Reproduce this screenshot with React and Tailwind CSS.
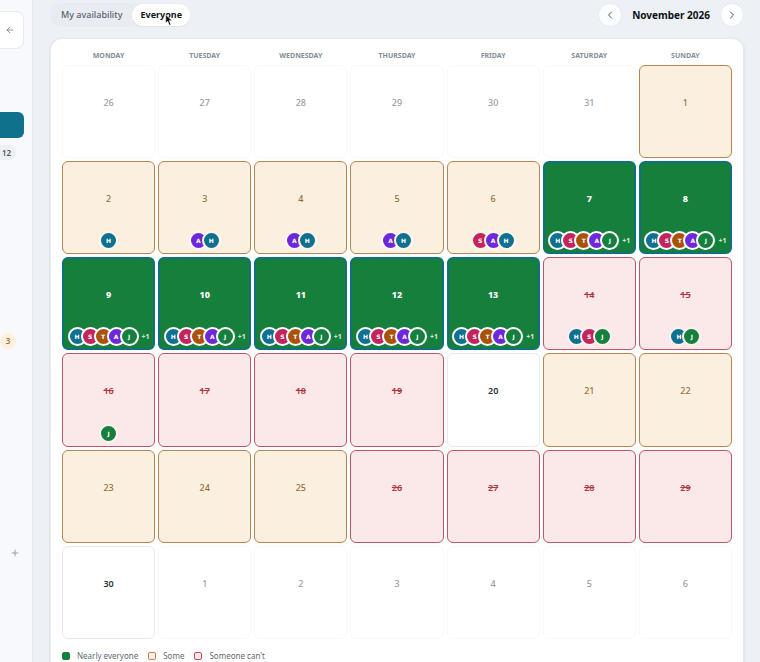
import { ArrowLeft, ChevronLeft, ChevronRight, Plus } from "lucide-react";

const weekdays = ["MONDAY", "TUESDAY", "WEDNESDAY", "THURSDAY", "FRIDAY", "SATURDAY", "SUNDAY"];

const cellStyles = {
  outside: "border-[#f8f9fb] bg-white",
  none: "border-[#e6eaf0] bg-white",
  some: "border-[#b58650] bg-[#fbf0e0]",
  most: "border-2 border-[#0e7080] bg-[#167f3c]",
  cannot: "border-[#bd5666] bg-[#fbe8e8]",
};

const numberStyles = {
  outside: "pt-[29px] font-medium text-[#9a9da1]",
  none: "pt-[29px] font-semibold text-[#26323c]",
  some: "pt-[29px] font-medium text-[#94703c]",
  most: "pt-7 font-extrabold text-white",
  cannot: "pt-[29px] font-semibold text-[#b03545] line-through",
};

const ringStyles = {
  some: "border-[#fdf6ec]",
  most: "border-white",
  cannot: "border-[#fdf1f1]",
};

const avatarColors = {
  H: "bg-[#0f718f]",
  S: "bg-[#c2255c]",
  T: "bg-[#a8530b]",
  A: "bg-[#6d28d9]",
  J: "bg-[#15803d]",
};

const people = { 2: "H", 3: "AH", 4: "AH", 5: "AH", 6: "SAH", 14: "HSJ", 15: "HJ", 16: "J" };

function statusOf(day) {
  if (day >= 7 && day <= 13) return "most";
  if ((day >= 14 && day <= 19) || (day >= 26 && day <= 29)) return "cannot";
  if (day === 20 || day === 30) return "none";
  return "some";
}

const days = [
  ...[26, 27, 28, 29, 30, 31].map((day) => ({ day, status: "outside", who: "" })),
  ...Array.from({ length: 30 }, (_, i) => {
    const status = statusOf(i + 1);
    return { day: i + 1, status, who: status === "most" ? "HSTAJ" : people[i + 1] || "" };
  }),
  ...[1, 2, 3, 4, 5, 6].map((day) => ({ day, status: "outside", who: "" })),
];

function Avatar({ name, ring }) {
  return (
    <span
      className={`-ml-1.5 flex size-[19px] items-center justify-center rounded-full border-2 font-['DejaVu_Sans',sans-serif] text-[6px] font-bold text-white first:ml-0 ${ring} ${avatarColors[name]}`}
    >
      {name}
    </span>
  );
}

function DayCell({ day, status, who }) {
  return (
    <button
      type="button"
      className={`flex aspect-square min-w-0 flex-col items-center justify-between rounded-md border ${cellStyles[status]}`}
    >
      <span className={`text-[9px] leading-4 ${numberStyles[status]}`}>{day}</span>
      {who && (
        <span className={`flex items-center ${status === "most" ? "pb-[2px]" : "pb-[3px]"}`}>
          {who.split("").map((name) => (
            <Avatar key={name} name={name} ring={ringStyles[status]} />
          ))}
          {status === "most" && (
            <span className="ml-[3px] text-[7px] font-bold leading-3 text-[#d5efdc]">+1</span>
          )}
        </span>
      )}
    </button>
  );
}

function Legend({ swatch, children }) {
  return (
    <li className="flex items-center gap-[7px]">
      <span className={`size-2 rounded-xs border ${swatch}`} />
      {children}
    </li>
  );
}

function Sidebar() {
  return (
    <aside className="flex w-[33px] shrink-0 flex-col items-start border-r border-[#e6ebf2] bg-[#f7f9fc]">
      <button
        type="button"
        aria-label="Back"
        className="mt-[11px] flex h-[38px] w-6 items-center justify-center rounded-r-lg border border-l-0 border-[#e7ebf1] bg-white pr-1 text-[#76808a]"
      >
        <ArrowLeft size={10} strokeWidth={2} />
      </button>
      <button
        type="button"
        aria-label="Calendar"
        className="mt-[63px] h-[26px] w-6 rounded-r-md bg-[#0f718c]"
      />
      <span className="mt-[7px] flex h-[15px] w-4 items-center rounded-r-full bg-[#eceff3] pl-[2px] text-[8px] font-semibold text-[#4b555f]">
        12
      </span>
      <span className="mt-[173px] flex h-4 w-4 items-center justify-center rounded-full bg-[#fdf0df] text-[8px] font-semibold text-[#a8703a]">
        3
      </span>
      <button type="button" aria-label="Add" className="ml-[10px] mt-[199px] text-[#8a939c]">
        <Plus size={10} strokeWidth={2} />
      </button>
    </aside>
  );
}

const roundButton =
  "flex size-6 items-center justify-center rounded-full border border-[#e8ecf2] bg-[#fcfdff] text-[#4c5660]";

export default function App() {
  return (
    <div className="flex h-screen overflow-hidden bg-[#edf1f6] font-['Noto_Sans','Open_Sans',sans-serif]">
      <Sidebar />
      <main className="min-w-0 flex-1 pl-[17px] pr-4 pt-[3px]">
        <header className="flex items-center justify-between">
          <div className="flex h-6 items-center rounded-full bg-[#e9edf3] text-[9px]">
            <button type="button" className="pl-[11px] pr-[10px] font-medium text-[#59626b]">
              My availability
            </button>
            <button
              type="button"
              className="relative h-[22px] rounded-full bg-white px-2 font-bold text-[#10151a] shadow-xs"
            >
              Everyone
              <svg
                viewBox="0 0 12 18"
                className="absolute left-[33px] top-[10px] h-3 w-2"
                aria-hidden="true"
              >
                <path
                  d="M1 1v13l3-3 2.5 6 2.5-1-2.5-6H11z"
                  fill="#111"
                  stroke="#fff"
                  strokeWidth="1"
                />
              </svg>
            </button>
          </div>
          <div className="flex items-center gap-[10px]">
            <button type="button" aria-label="Previous month" className={roundButton}>
              <ChevronLeft size={12} strokeWidth={2} />
            </button>
            <h1 className="text-[10px] font-bold leading-4 text-[#0d1216]">November 2026</h1>
            <button type="button" aria-label="Next month" className={roundButton}>
              <ChevronRight size={12} strokeWidth={2} />
            </button>
          </div>
        </header>

        <section className="mt-[11px] h-screen rounded-xl border border-[#e6eaf1] bg-white px-[11px] pt-3 shadow-sm">
          <div className="grid grid-cols-7 gap-[3px] text-center text-[7px] font-bold leading-[10px] text-[#828d96]">
            {weekdays.map((name) => (
              <div key={name}>{name}</div>
            ))}
          </div>
          <div className="mt-1 grid grid-cols-7 gap-[3px]">
            {days.map((item, i) => (
              <DayCell key={i} {...item} />
            ))}
          </div>
          <ul className="mt-3 flex items-center gap-[10px] text-[8px] leading-[10px] text-[#626a72]">
            <Legend swatch="border-[#15803d] bg-[#15803d]">Nearly everyone</Legend>
            <Legend swatch="border-[#b98a4e] bg-[#fbf0e0]">Some</Legend>
            <Legend swatch="border-[#c9475e] bg-[#fce8e8]">Someone can&apos;t</Legend>
          </ul>
        </section>
      </main>
    </div>
  );
}
